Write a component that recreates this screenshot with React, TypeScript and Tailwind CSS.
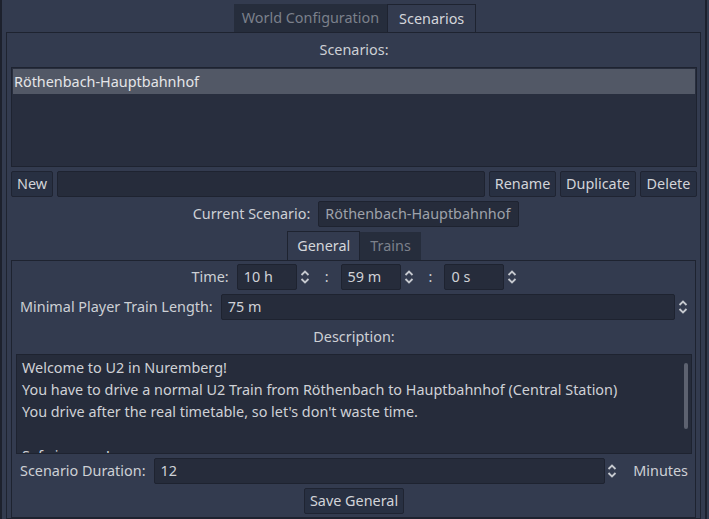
import React from 'react';

const font = { fontFamily: '"Noto Sans", "DejaVu Sans", sans-serif' };

function Arrows() {
  return (
    <svg width="10" height="16" viewBox="0 0 10 16" fill="none" stroke="#c6c9cf" strokeWidth="1.8">
      <path d="M1.5 6 L5 2.5 L8.5 6" />
      <path d="M1.5 10 L5 13.5 L8.5 10" />
    </svg>
  );
}

function Field({ value, className = '', muted = false }: { value?: string; className?: string; muted?: boolean }) {
  return (
    <div
      className={`h-[26px] flex items-center px-[6px] bg-[#262c3b] border border-[#1e2330] rounded-[2px] whitespace-nowrap ${
        muted ? 'text-[#9ea2aa]' : 'text-[#cfd1d6]'
      } ${className}`}
    >
      {value}
    </div>
  );
}

function Spin({ value, className = '' }: { value: string; className?: string }) {
  return (
    <div className="flex items-center">
      <Field value={value} className={className} />
      <div className="w-[22px] flex items-center pl-[3px]">
        <Arrows />
      </div>
    </div>
  );
}

function Btn({ label, className = '' }: { label: string; className?: string }) {
  return (
    <div
      className={`h-[26px] flex items-center justify-center bg-[#283042] border border-[#1f2432] rounded-[2px] text-[#d2d4d9] whitespace-nowrap ${className}`}
    >
      {label}
    </div>
  );
}

export default function App() {
  return (
    <div
      style={font}
      className="w-[709px] h-[519px] overflow-hidden bg-[#333b4f] text-[14.4px] text-[#cdd0d5] flex"
    >
      <div className="w-[2px] bg-[#1d212d]" />
      <div className="w-[4px]" />
      <div className="w-[695px] flex flex-col">
        {/* top tabs */}
        <div className="h-[32px] flex items-end justify-center pl-[3px]">
          <div className="h-[28px] px-[8px] flex items-center bg-[#262d3c] text-[#7b808b]">World Configuration</div>
          <div className="h-[28px] px-[11px] flex items-center border border-b-0 border-[#1e2330] text-[#d4d6db]">
            Scenarios
          </div>
        </div>
        <div className="flex-1 border border-[#1e2330] pl-[4px] pr-[3px] pt-[4px] flex flex-col">
          <div className="h-[26px] flex items-center justify-center">Scenarios:</div>
          <div className="mt-[4px] h-[100px] bg-[#282e3e] border border-[#1e2330] p-[1px]">
            <div className="h-[25px] flex items-center pl-[1px] bg-[#525866] text-[#e4e5e8]">Röthenbach-Hauptbahnhof</div>
          </div>
          <div className="mt-[4px] flex gap-[4px]">
            <Btn label="New" className="w-[42px]" />
            <Field className="flex-1" />
            <Btn label="Rename" className="w-[67px]" />
            <Btn label="Duplicate" className="w-[76px]" />
            <Btn label="Delete" className="w-[57px]" />
          </div>
          <div className="mt-[4px] flex items-center justify-center gap-[8px] pl-[4px]">
            <span>Current Scenario:</span>
            <Field value="Röthenbach-Hauptbahnhof" muted className="w-[201px]" />
          </div>
          {/* inner tabs */}
          <div className="mt-[4px] h-[29px] flex items-end justify-center">
            <div className="h-[29px] px-[9px] flex items-center border border-b-0 border-[#1e2330] text-[#d4d6db]">
              General
            </div>
            <div className="h-[28px] px-[10px] flex items-center bg-[#262d3c] text-[#7b808b]">Trains</div>
          </div>
          <div className="flex-1 mr-[1px] border border-[#1e2330] pl-[4px] pr-[3px] pt-[3px] flex flex-col">
            <div className="h-[26px] flex items-center justify-center pl-[10px]">
              <span className="mr-[8px]">Time:</span>
              <Spin value="10 h" className="w-[60px]" />
              <span className="ml-[6px] mr-[12px]">:</span>
              <Spin value="59 m" className="w-[60px]" />
              <span className="ml-[6px] mr-[12px]">:</span>
              <Spin value="0 s" className="w-[60px]" />
            </div>
            <div className="mt-[4px] flex items-center pl-[4px]">
              <span className="mr-[8px]">Minimal Player Train Length:</span>
              <Field value="75 m" className="flex-1" />
              <div className="w-[17px] flex items-center pl-[3px]">
                <Arrows />
              </div>
            </div>
            <div className="mt-[4px] h-[26px] flex items-center justify-center">Description:</div>
            <div className="mt-[4px] h-[100px] relative overflow-hidden bg-[#262c3b] border border-[#1e2330] pl-[5px] pt-[2px] leading-[22px] text-[#cfd1d6]">
              <div>Welcome to U2 in Nuremberg!</div>
              <div>You have to drive a normal U2 Train from Röthenbach to Hauptbahnhof (Central Station)</div>
              <div>You drive after the real timetable, so let's don't waste time.</div>
              <div>&nbsp;</div>
              <div>Safe journey!</div>
              <div className="absolute right-[3px] top-[8px] w-[4px] h-[66px] rounded-full bg-[#5d6270]" />
            </div>
            <div className="mt-[4px] flex items-center pl-[4px]">
              <span className="mr-[8px]">Scenario Duration:</span>
              <Field value="12" className="flex-1" />
              <div className="w-[14px] flex items-center pl-[2px]">
                <Arrows />
              </div>
              <span className="ml-[14px] mr-[4px]">Minutes</span>
            </div>
            <div className="mt-[4px] flex justify-center">
              <Btn label="Save General" className="w-[100px]" />
            </div>
          </div>
        </div>
      </div>
      <div className="w-[4px]" />
      <div className="w-[2px] bg-[#1d212d]" />
    </div>
  );
}
